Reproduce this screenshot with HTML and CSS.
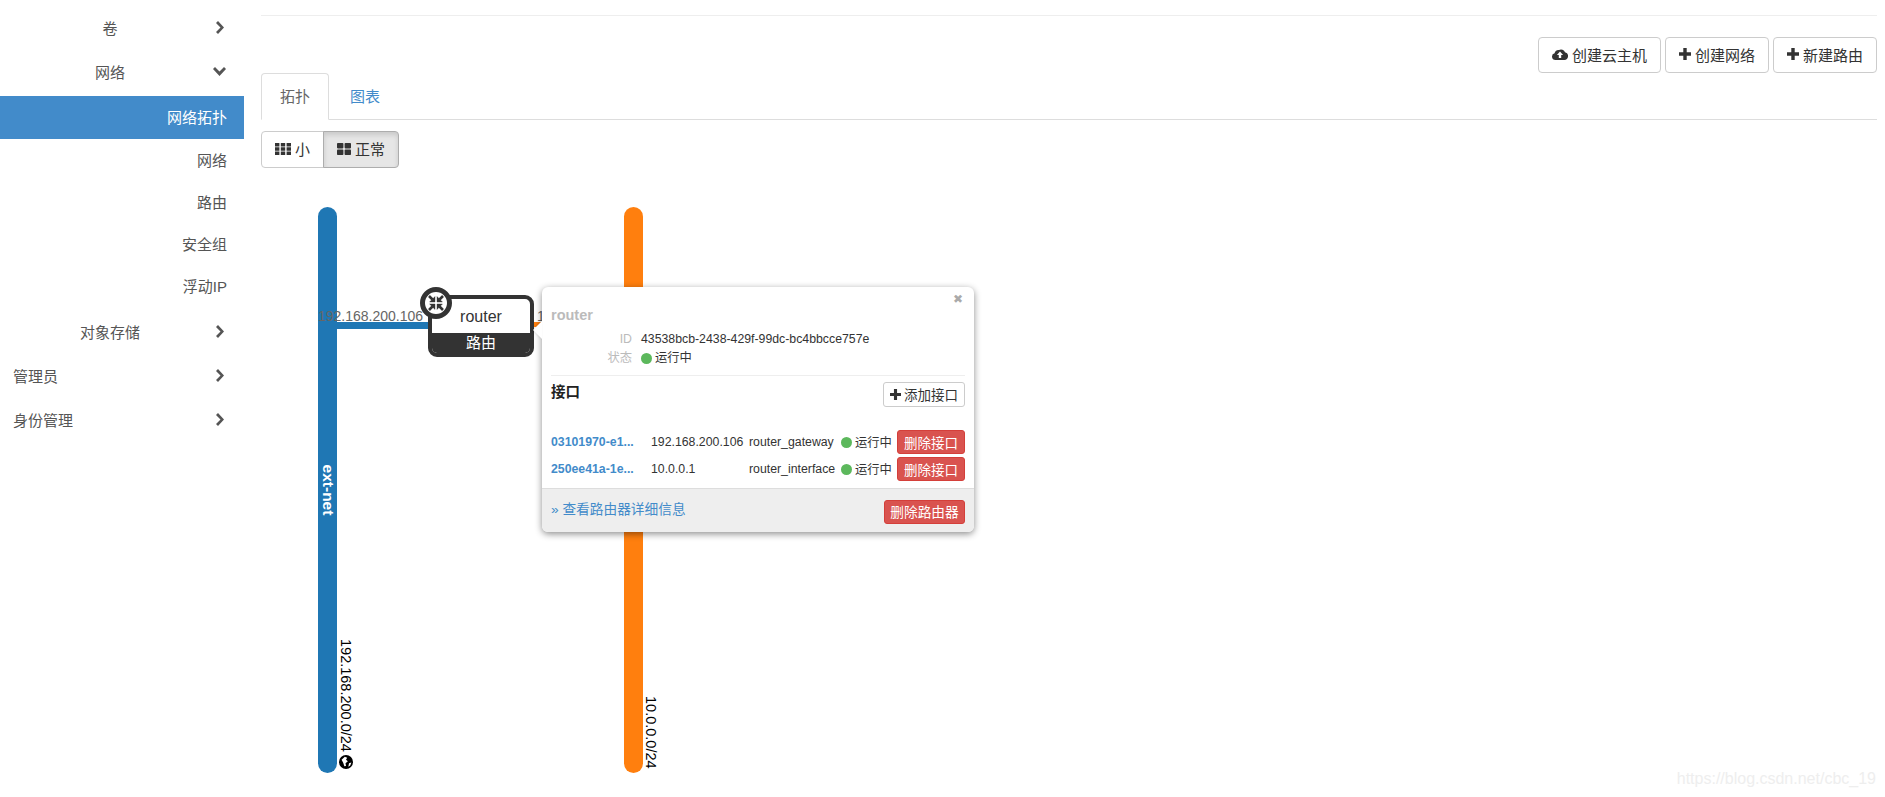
FILE: index.html
```html
<!DOCTYPE html>
<html lang="zh-CN">
<head>
<meta charset="utf-8">
<title>网络拓扑</title>
<link rel="stylesheet" href="styles.css">
</head>
<body>
<svg class="defs" width="0" height="0" aria-hidden="true">
  <symbol id="i-right" viewBox="0 0 8 13"><path d="M2 0 8 6.5 2 13 0 11 4.5 6.5 0 2Z"/></symbol>
  <symbol id="i-down" viewBox="0 0 13 9"><path d="M0 2 2 0 6.5 4.5 11 0 13 2 6.5 9Z"/></symbol>
  <symbol id="i-plus" viewBox="0 0 12 12"><path d="M4.3 0H7.7V4.3H12V7.7H7.7V12H4.3V7.7H0V4.3H4.3Z"/></symbol>
  <symbol id="i-th" viewBox="0 0 16 12"><path d="M0 0H4.4V3.4H0ZM5.8 0H10.2V3.4H5.8ZM11.6 0H16V3.4H11.6ZM0 4.3H4.4V7.7H0ZM5.8 4.3H10.2V7.7H5.8ZM11.6 4.3H16V7.7H11.6ZM0 8.6H4.4V12H0ZM5.8 8.6H10.2V12H5.8ZM11.6 8.6H16V12H11.6Z"/></symbol>
  <symbol id="i-large" viewBox="0 0 14 12"><rect width="6.4" height="5.4" rx=".8"/><rect x="7.6" width="6.4" height="5.4" rx=".8"/><rect y="6.6" width="6.4" height="5.4" rx=".8"/><rect x="7.6" y="6.6" width="6.4" height="5.4" rx=".8"/></symbol>
  <symbol id="i-cloud" viewBox="0 0 16 12"><path fill-rule="evenodd" d="M3.4 12A3.4 3.4 0 0 1 2.6 5.3 3.6 3.6 0 0 1 7 2 4.2 4.2 0 0 1 13 4.3 3.9 3.9 0 0 1 12.4 12ZM8 3.6 4.9 7H6.8V10H9.2V7H11.1Z"/></symbol>
</svg>

<div class="app">
  <nav class="sidebar">
    <a class="row top"><span class="label">卷</span><svg class="chev-r"><use href="#i-right"/></svg></a>
    <a class="row top"><span class="label">网络</span><svg class="chev-d"><use href="#i-down"/></svg></a>
    <a class="row sub active">网络拓扑</a>
    <a class="row sub">网络</a>
    <a class="row sub">路由</a>
    <a class="row sub">安全组</a>
    <a class="row sub">浮动IP</a>
    <a class="row top after-sub"><span class="label">对象存储</span><svg class="chev-r"><use href="#i-right"/></svg></a>
    <a class="row top"><span class="label left">管理员</span><svg class="chev-r"><use href="#i-right"/></svg></a>
    <a class="row top"><span class="label left">身份管理</span><svg class="chev-r"><use href="#i-right"/></svg></a>
  </nav>

  <main class="main">
    <div class="actions">
      <button class="btn"><svg class="ic-cloud"><use href="#i-cloud"/></svg>创建云主机</button>
      <button class="btn"><svg class="ic-plus"><use href="#i-plus"/></svg>创建网络</button>
      <button class="btn"><svg class="ic-plus"><use href="#i-plus"/></svg>新建路由</button>
    </div>

    <ul class="tabs">
      <li class="tab current">拓扑</li>
      <li class="tab tab-link">图表</li>
    </ul>

    <div class="btn-group">
      <button class="seg"><svg class="ic-th"><use href="#i-th"/></svg>小</button>
      <button class="seg pressed"><svg class="ic-large"><use href="#i-large"/></svg>正常</button>
    </div>

    <section class="canvas">
      <div class="net net-ext"><span class="net-name">ext-net</span></div>
      <div class="net net-int"></div>
      <div class="cidr cidr-ext">192.168.200.0/24</div>
      <svg class="globe" viewBox="0 0 12 12"><circle cx="6" cy="6" r="6" fill="#000"/><path d="M2.2 4 5 1.6 7 2.4 6 4 7.6 5.4 5.6 7 6 9.4 4.6 9.6 3.6 6.6ZM8.6 7 10.6 6.4 9.6 9 8 10Z" fill="#fff"/></svg>
      <div class="cidr cidr-int">10.0.0.0/24</div>

      <div class="wire wire-ext"></div>
      <div class="wire wire-int"></div>
      <div class="ip ip-ext">192.168.200.106</div>
      <div class="ip ip-int">1</div>

      <div class="router">
        <div class="router-name">router</div>
        <div class="router-type">路由</div>
      </div>
      <svg class="router-badge" viewBox="0 0 32 32">
        <circle cx="16" cy="16" r="13.5" fill="#fff" stroke="#333" stroke-width="5"/>
        <g fill="#333" stroke="#333">
          <path d="M15 15H9.6L15 9.6Z" stroke-width=".4"/>
          <path d="M17 15H22.4L17 9.6Z" stroke-width=".4"/>
          <path d="M15 17H9.6L15 22.4Z" stroke-width=".4"/>
          <path d="M17 17H22.4L17 22.4Z" stroke-width=".4"/>
          <path d="M9 9 12.5 12.5M23 9 19.5 12.5M9 23 12.5 19.5M23 23 19.5 19.5" stroke-width="2.6" fill="none"/>
        </g>
      </svg>

      <div class="popup">
        <span class="popup-arrow"></span>
        <div class="popup-body">
          <div class="close">✖</div>
          <h3 class="popup-title">router</h3>
          <dl class="meta">
            <dt>ID</dt><dd>43538bcb-2438-429f-99dc-bc4bbcce757e</dd>
            <dt>状态</dt><dd><i class="dot"></i>运行中</dd>
          </dl>
          <div class="section-head">
            <strong>接口</strong>
            <button class="btn-xs"><svg class="ic-plus"><use href="#i-plus"/></svg>添加接口</button>
          </div>
          <div class="port-table">
            <a class="port-id">03101970-e1...</a><span>192.168.200.106</span><span>router_gateway</span><span class="port-status"><i class="dot"></i>运行中</span><button class="btn-danger">删除接口</button>
            <a class="port-id">250ee41a-1e...</a><span>10.0.0.1</span><span>router_interface</span><span class="port-status"><i class="dot"></i>运行中</span><button class="btn-danger">删除接口</button>
          </div>
        </div>
        <div class="popup-foot">
          <a class="detail">» 查看路由器详细信息</a>
          <button class="btn-danger big">删除路由器</button>
        </div>
      </div>
    </section>
  </main>
</div>
<div class="watermark">https://blog.csdn.net/cbc_19</div>
</body>
</html>
```
FILE: styles.css
```css
* { box-sizing: border-box; }
html, body { margin: 0; height: 100%; overflow: hidden; background: #fff; }
body {
  font-family: "Liberation Sans", "Noto Sans CJK SC", sans-serif;
  font-size: 15px;
  color: #333;
  position: relative;
}
.defs { position: absolute; }
svg { fill: currentColor; display: block; }
button { font: inherit; color: inherit; cursor: pointer; }

.app { display: flex; height: 100vh; }

/* sidebar */
.sidebar { width: 244px; flex: none; padding-top: 6px; color: #555; }
.row { display: flex; align-items: center; padding-bottom: 2px; }
.row.top { height: 44px; padding-right: 18px; }
.row.after-sub { margin-top: 3px; }
.label { flex: 1; text-align: center; padding-left: 7px; }
.label.left { text-align: left; padding-left: 13px; }
.chev-r { width: 8px; height: 13px; margin: 0 2px 0 3px; flex: none; }
.chev-d { width: 13px; height: 9px; flex: none; }
.row.sub { height: 42px; justify-content: flex-end; padding-right: 17px; }
.row.active { height: 43px; margin-top: 2px; background: #428bca; color: #fff; }

/* main */
.main {
  flex: 1;
  min-width: 0;
  margin: 15px 8px 0 17px;
  border-top: 1px solid #eee;
  display: flex;
  flex-direction: column;
}
.actions { display: flex; justify-content: flex-end; gap: 4px; margin-top: 21px; height: 36px; }
.btn {
  display: flex;
  align-items: center;
  height: 36px;
  padding: 0 13px 2px;
  background: #fff;
  border: 1px solid #ccc;
  border-radius: 4px;
  color: #333;
}
.ic-cloud { width: 16px; height: 12px; margin-right: 4px; }
.ic-plus { width: 12px; height: 12px; margin-right: 4px; }
.ic-th { width: 16px; height: 12px; margin-right: 4px; }
.ic-large { width: 14px; height: 12px; margin-right: 4px; }

.tabs {
  list-style: none;
  margin: 0;
  padding: 0;
  display: flex;
  gap: 2px;
  height: 47px;
  border-bottom: 1px solid #ddd;
}
.tab { height: 47px; padding: 12px 19px 0; }
.tab.current {
  color: #666;
  background: #fff;
  border: 1px solid #ddd;
  border-bottom-color: #fff;
  border-radius: 4px 4px 0 0;
  padding: 11px 18px 0;
}
.tab.tab-link { color: #428bca; }

.btn-group { display: flex; margin-top: 11px; height: 37px; }
.seg {
  display: flex;
  align-items: center;
  height: 37px;
  padding: 0 13px 2px;
  background: #fff;
  border: 1px solid #ccc;
  border-radius: 4px 0 0 4px;
  color: #333;
}
.seg.pressed {
  margin-left: -1px;
  background: #e6e6e6;
  border-color: #adadad;
  border-radius: 0 4px 4px 0;
  box-shadow: inset 0 3px 5px rgba(0, 0, 0, .125);
}

/* topology: origin is (261, 168) on the page */
.canvas { position: relative; flex: 1; min-height: 0; }
.net { position: absolute; top: 39px; width: 19px; height: 566px; border-radius: 10px; }
.net-ext { left: 57px; background: #1f77b4; }
.net-int { left: 363px; background: #ff7f0e; }
.net-name {
  position: absolute;
  left: 50%;
  top: 283px;
  transform: translate(-50%, -50%) rotate(90deg);
  color: #fff;
  font-weight: 700;
  font-size: 15.5px;
  white-space: nowrap;
}
.cidr {
  position: absolute;
  writing-mode: vertical-rl;
  color: #000;
  font-size: 14.5px;
  line-height: 14px;
  white-space: nowrap;
}
.cidr-ext { left: 78px; top: 471px; }
.cidr-int { left: 383px; top: 528px; }
.globe { position: absolute; left: 78px; top: 587px; width: 14px; height: 14px; }

.wire { position: absolute; top: 154px; }
.wire-ext { left: 76px; width: 100px; height: 7px; background: #1f77b4; }
.wire-int { left: 268px; width: 100px; height: 5px; background: #ff7f0e; }
.ip { position: absolute; color: #666; font-size: 14px; line-height: 16px; white-space: nowrap; top: 140px; }
.ip-ext { left: 57px; }
.ip-int { left: 276px; }

.router {
  position: absolute;
  left: 167px;
  top: 127px;
  width: 106px;
  height: 62px;
  background: #fff;
  border: 4px solid #333;
  border-radius: 9px;
  display: flex;
  flex-direction: column;
  overflow: hidden;
}
.router-name { height: 34px; text-align: center; line-height: 36px; font-size: 16px; color: #333; }
.router-type { flex: 1; background: #333; color: #fff; text-align: center; line-height: 20px; font-size: 15px; }
.router-badge { position: absolute; left: 159px; top: 119px; width: 32px; height: 32px; }

.popup {
  position: absolute;
  left: 281px;
  top: 119px;
  width: 432px;
  height: 245px;
  background: #fff;
  border-radius: 6px;
  box-shadow: 0 2px 7px rgba(0, 0, 0, .45);
  display: flex;
  flex-direction: column;
  font-size: 12.3px;
  color: #333;
}
.popup-arrow {
  position: absolute;
  left: -9px;
  top: 34px;
  border-style: solid;
  border-width: 9px 9px 9px 0;
  border-color: transparent #fff transparent transparent;
  filter: drop-shadow(-1px 0 1px rgba(0, 0, 0, .12));
}
.popup-body { flex: 1; padding: 0 9px; position: relative; }
.close {
  position: absolute;
  right: 11px;
  top: 4px;
  font-size: 12px;
  line-height: 16px;
  color: #aaa;
  font-family: "DejaVu Sans", sans-serif;
}
.popup-title { margin: 0; padding-top: 20px; font-size: 14.5px; line-height: 16px; font-weight: 700; color: #bbb; }
.meta {
  margin: 8px 0 0;
  display: grid;
  grid-template-columns: 81px 1fr;
  column-gap: 9px;
  row-gap: 2px;
  line-height: 17px;
  padding-bottom: 8px;
  border-bottom: 1px solid #eee;
}
.meta dt { text-align: right; color: #bbb; }
.meta dd { margin: 0; display: flex; align-items: center; }
.dot { display: inline-block; flex: none; width: 11px; height: 11px; border-radius: 50%; background: #5cb85c; margin-right: 3px; }
.section-head { display: flex; justify-content: space-between; align-items: flex-start; padding-top: 6px; height: 54px; }
.section-head strong { font-size: 14.5px; line-height: 20px; color: #222; }
.btn-xs {
  display: flex;
  align-items: center;
  height: 25px;
  padding: 0 6px 1px;
  background: #fff;
  border: 1px solid #ccc;
  border-radius: 3px;
  font-size: 13.5px;
}
.btn-xs .ic-plus { width: 11px; height: 11px; margin-right: 3px; }
.port-table {
  display: grid;
  grid-template-columns: 100px 98px 92px 56px 68px;
  grid-auto-rows: 24px;
  row-gap: 3px;
  align-items: center;
  white-space: nowrap;
}
.port-id { color: #428bca; font-weight: 700; }
.port-status { display: flex; align-items: center; }
.btn-danger {
  height: 100%;
  padding: 0 0 1px;
  background: #d9534f;
  color: #fff;
  border: 1px solid #d43f3a;
  border-radius: 3px;
  font-size: 13.5px;
}
.popup-foot {
  height: 44px;
  flex: none;
  background: #eee;
  border-top: 1px solid #ddd;
  border-radius: 0 0 6px 6px;
  display: flex;
  justify-content: space-between;
  align-items: center;
  padding: 0 9px;
}
.detail { color: #428bca; font-size: 13.7px; margin-top: -5px; }
.btn-danger.big { height: 24px; width: 81px; margin-top: 2px; font-size: 13.7px; }

.watermark {
  position: absolute;
  right: 9px;
  bottom: 9px;
  color: #eee;
  font-size: 16px;
  line-height: 18px;
}
```
